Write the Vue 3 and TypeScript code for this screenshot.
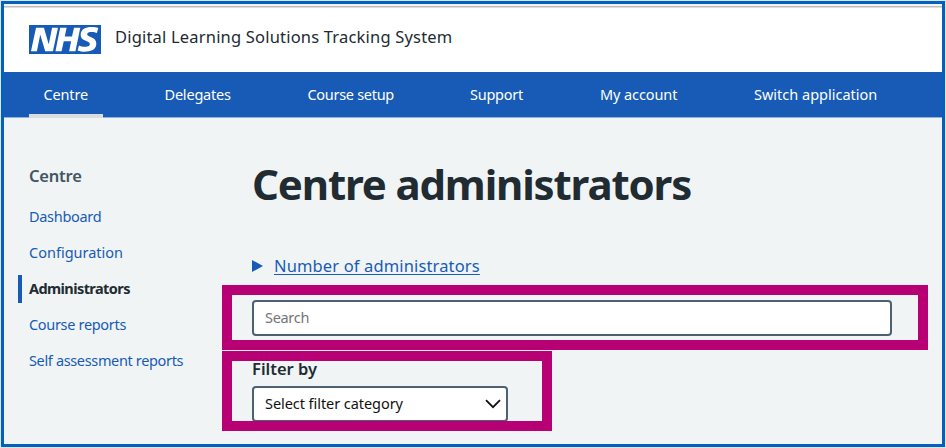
<script setup lang="ts">
interface Item {
  label: string
  key: string
}

const navItems: Item[] = [
  { label: 'Centre', key: 'centre' },
  { label: 'Delegates', key: 'delegates' },
  { label: 'Course setup', key: 'course' },
  { label: 'Support', key: 'support' },
  { label: 'My account', key: 'account' },
  { label: 'Switch application', key: 'switch' },
]

const sideItems: Item[] = [
  { label: 'Dashboard', key: 'dashboard' },
  { label: 'Configuration', key: 'configuration' },
  { label: 'Administrators', key: 'administrators' },
  { label: 'Course reports', key: 'reports' },
  { label: 'Self assessment reports', key: 'assessment' },
]
</script>

<template>
  <div class="page">
    <div class="frame">
      <header class="header">
        <svg class="logo" viewBox="0 0 40 16" preserveAspectRatio="none" role="img" aria-label="NHS">
          <path d="M0 0h40v16H0z" fill="#185bb6" />
          <path
            fill="#fff"
            d="M3.900 1.500h4.400l2.600 9h.1l1.800-9h3.300l-2.800 13H9l-2.700-9h-.1l-1.800 9H1.100M17.300 1.500h3.600l-1 4.900h4L25 1.500h3.500l-2.700 13h-3.500l1.100-5.600h-4.100l-1.200 5.600h-3.400M37.700 4.400c-.7-.3-1.600-.6-2.900-.6-1.400 0-2.500.2-2.500 1.300 0 1.800 5.100 1.200 5.100 5.100 0 3.600-3.300 4.500-6.400 4.500-1.300 0-2.900-.3-4-.7l.8-2.700c.7.4 2.100.7 3.200.7s2.800-.2 2.800-1.500c0-2.100-5.100-1.300-5.100-5 0-3.400 2.900-4.400 5.800-4.400 1.600 0 3.100.2 4 .6"
          />
        </svg>
        <span class="service">Digital Learning Solutions Tracking System</span>
      </header>

      <nav class="nav">
        <a v-for="item in navItems" :key="item.key" :class="['nav-link', item.key]">{{ item.label }}</a>
      </nav>

      <div class="body">
        <aside class="side">
          <h2 class="side-title">Centre</h2>
          <a v-for="item in sideItems" :key="item.key" :class="['side-link', item.key]"><span>{{ item.label }}</span></a>
        </aside>

        <main class="main">
          <h1 class="heading">Centre administrators</h1>
          <div class="details">
            <svg class="arrow" viewBox="0 0 11 12"><path d="M0 0 11 6 0 12z" fill="#185bb6" /></svg>
            <span class="summary">Number of administrators</span>
          </div>
          <section class="mark mark-search">
            <div class="search"><span class="search-text">Search</span></div>
          </section>
          <section class="mark mark-filter">
            <div class="label">Filter by</div>
            <div class="select">
              <span class="select-text">Select filter category</span>
              <svg class="chevron" viewBox="0 0 16 10">
                <path d="M1 1.200 8 8.200 15 1.200" fill="none" stroke="#111" stroke-width="1.800" />
              </svg>
            </div>
          </section>
        </main>
      </div>
    </div>
  </div>
</template>

<style>
body {
  margin: 0;
}
</style>

<style scoped>
.page {
  box-sizing: border-box;
  width: 946px;
  height: 448px;
  padding: 1px;
  background: #d6e8f6;
  font-family: "Noto Sans", "Open Sans", sans-serif;
  color: #212b32;
  overflow: hidden;
  white-space: nowrap;
}
.frame {
  box-sizing: border-box;
  width: 944px;
  height: 446px;
  border: 3px solid #0560bc;
  background: #f0f4f5;
  overflow: hidden;
}
.header {
  box-sizing: border-box;
  height: 68px;
  border-top: 2px solid #f4f3f1;
  padding: 0 25px;
  display: flex;
  align-items: center;
  background: linear-gradient(#bfc0be 0 1px, #dcdddb 1px 2px, #fff 2px);
}
.logo {
  width: 72px;
  height: 29px;
  margin-top: 1px;
}
.service {
  margin-left: 14px;
  font-size: 16.5px;
  line-height: 24px;
  padding-bottom: 4px;
  letter-spacing: 0.19px;
}
.nav {
  height: 45px;
  background: #185bb6;
  border-bottom: 1px solid #8fb3e0;
  display: flex;
  color: #fff;
  font-size: 14.5px;
  padding-left: 25px;
}
.nav-link {
  box-sizing: border-box;
  height: 46px;
  padding: 12px 0 0 14.5px;
  line-height: 20px;
}
.nav-link.centre {
  width: 74px;
  border-bottom: 4px solid #d8dde0;
  letter-spacing: -0.15px;
}
.nav-link.delegates { width: 0; margin-left: 47px; letter-spacing: -0.2px; }
.nav-link.course { width: 0; margin-left: 128.5px; letter-spacing: -0.3px; }
.nav-link.support { width: 0; margin-left: 148px; letter-spacing: -0.25px; }
.nav-link.account { width: 0; margin-left: 115.5px; letter-spacing: -0.1px; }
.nav-link.switch { width: 0; margin-left: 139.5px; }
.body {
  display: flex;
}
.side {
  width: 218px;
  display: flex;
  flex-direction: column;
  flex: none;
}
.side-title {
  margin: 47px 0 16px 25px;
  font-size: 16.5px;
  line-height: 22px;
  font-weight: 600;
  letter-spacing: -0.2px;
  color: #425563;
}
.side-link {
  margin: 0 0 8px 14px;
  padding-left: 11px;
  line-height: 26px;
  height: 28px;
  font-size: 14.5px;
  color: #185bb6;
}
.side-link.dashboard { letter-spacing: -0.3px; }
.side-link.reports { letter-spacing: -0.32px; }
.side-link.assessment { letter-spacing: -0.35px; }
.side-link.administrators {
  border-left: 4px solid #185bb6;
  padding-left: 7px;
  font-weight: 700;
  letter-spacing: -0.58px;
  color: #212b32;
}
.main {
  flex: none;
  width: 706px;
}
.heading {
  margin: 38px 0 0 30px;
  font-size: 42px;
  line-height: 56px;
  font-weight: 700;
  letter-spacing: -1.15px;
}
.details {
  margin: 43px 0 0 30px;
  height: 22px;
  display: flex;
  align-items: center;
}
.arrow {
  width: 11px;
  height: 12px;
  margin-right: 11px;
}
.summary {
  font-size: 16.5px;
  line-height: 22px;
  letter-spacing: 0.14px;
  color: #185bb6;
  text-decoration: underline;
  text-decoration-thickness: 1px;
  text-underline-offset: 2px;
}
.mark {
  box-sizing: border-box;
  border: 10px solid #b70074;
}
.mark-search {
  margin-top: 8px;
  height: 65px;
  padding: 5px 26px 0 20px;
}
.search {
  box-sizing: border-box;
  height: 36px;
  border: 2px solid #4c6272;
  border-radius: 4px;
  background: #fff;
  padding-left: 11px;
  line-height: 31px;
  font-size: 14.5px;
  letter-spacing: -0.3px;
  color: #757575;
}
.mark-filter {
  margin-top: 1px;
  width: 330px;
  height: 80px;
  padding-left: 20px;
  overflow: hidden;
}
.label {
  height: 25px;
  line-height: 16px;
  font-size: 16.5px;
  font-weight: 600;
}
.select {
  box-sizing: border-box;
  width: 256px;
  height: 36px;
  border: 2px solid #4c6272;
  border-radius: 4px;
  background: #fff;
  padding: 0 5px 0 11px;
  display: flex;
  align-items: center;
  justify-content: space-between;
  font-size: 14.5px;
  letter-spacing: -0.06px;
  color: #111;
}
.select-text {
  padding-bottom: 2px;
}
.chevron {
  width: 16px;
  height: 10px;
}
</style>
